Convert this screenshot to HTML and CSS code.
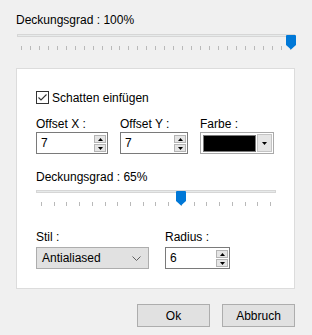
FILE: index.html
```html
<!DOCTYPE html>
<html lang="de">
<head>
  <meta charset="UTF-8" />
  <title>Schatten</title>
  <link rel="stylesheet" href="styles.css">
</head>
<body>
  <div class="dialog">
    <div class="label">Deckungsgrad : 100%</div>
    <div class="slider slider-wide">
      <div class="track"></div>
      <div class="ticks" id="ticks-top"></div>
      <svg class="thumb" style="left: 269px" width="10" height="15" viewBox="0 0 10 15"><path d="M0 1 Q0 0 1 0 H9 Q10 0 10 1 V10 L5 14.5 L0 10 Z" fill="#0078d7"/></svg>
    </div>

    <div class="panel">
      <label class="check-row">
        <svg class="checkbox" width="13" height="13" viewBox="0 0 13 13"><rect x="0.5" y="0.5" width="12" height="12" fill="#fff" stroke="#333"/><path d="M2.5 6.5 L5 9 L10.5 3.5" fill="none" stroke="#333" stroke-width="1.1"/></svg>
        <span>Schatten einfügen</span>
      </label>

      <div class="fields">
        <div class="field field-x">
          <div class="label">Offset X :</div>
          <div class="spin">
            <span class="spin-value">7</span>
            <div class="spin-buttons">
              <div class="spin-btn"><svg width="5" height="3" viewBox="0 0 5 3"><path d="M0 3 L2.5 0 L5 3 Z" fill="#000"/></svg></div>
              <div class="spin-btn"><svg width="5" height="3" viewBox="0 0 5 3"><path d="M0 0 L2.5 3 L5 0 Z" fill="#000"/></svg></div>
            </div>
          </div>
        </div>
        <div class="field field-y">
          <div class="label">Offset Y :</div>
          <div class="spin">
            <span class="spin-value">7</span>
            <div class="spin-buttons">
              <div class="spin-btn"><svg width="5" height="3" viewBox="0 0 5 3"><path d="M0 3 L2.5 0 L5 3 Z" fill="#000"/></svg></div>
              <div class="spin-btn"><svg width="5" height="3" viewBox="0 0 5 3"><path d="M0 0 L2.5 3 L5 0 Z" fill="#000"/></svg></div>
            </div>
          </div>
        </div>
        <div class="field field-color">
          <div class="label">Farbe :</div>
          <div class="color-combo">
            <div class="swatch"></div>
            <div class="combo-btn"><svg width="5" height="3" viewBox="0 0 5 3"><path d="M0 0 L2.5 3 L5 0 Z" fill="#000"/></svg></div>
          </div>
        </div>
      </div>

      <div class="label label-opacity">Deckungsgrad : 65%</div>
      <div class="slider slider-inner">
        <div class="track"></div>
        <div class="ticks" id="ticks-inner"></div>
        <svg class="thumb" style="left: 140px" width="10" height="15" viewBox="0 0 10 15"><path d="M0 1 Q0 0 1 0 H9 Q10 0 10 1 V10 L5 14.5 L0 10 Z" fill="#0078d7"/></svg>
      </div>

      <div class="fields fields-bottom">
        <div class="field field-style">
          <div class="label label-tall">Stil :</div>
          <div class="select">
            <span>Antialiased</span>
            <svg width="9" height="5" viewBox="0 0 9 5"><path d="M0.5 0.5 L4.5 4.5 L8.5 0.5" fill="none" stroke="#606060"/></svg>
          </div>
        </div>
        <div class="field field-radius">
          <div class="label label-tall">Radius :</div>
          <div class="spin">
            <span class="spin-value">6</span>
            <div class="spin-buttons">
              <div class="spin-btn"><svg width="5" height="3" viewBox="0 0 5 3"><path d="M0 3 L2.5 0 L5 3 Z" fill="#000"/></svg></div>
              <div class="spin-btn"><svg width="5" height="3" viewBox="0 0 5 3"><path d="M0 0 L2.5 3 L5 0 Z" fill="#000"/></svg></div>
            </div>
          </div>
        </div>
      </div>
    </div>

    <div class="actions">
      <button class="btn">Ok</button>
      <button class="btn">Abbruch</button>
    </div>
  </div>

  <script>
    function addTicks(id, count) {
      var box = document.getElementById(id);
      for (var i = 0; i < count; i++) {
        var t = document.createElement('span');
        t.className = 'tick';
        box.appendChild(t);
      }
    }
    addTicks('ticks-top', 31);
    addTicks('ticks-inner', 19);
  </script>
</body>
</html>
```

FILE: styles.css
```css
* {
  box-sizing: border-box;
  margin: 0;
  padding: 0;
}

body {
  font-family: 'Liberation Sans', Arial, sans-serif;
  font-size: 12px;
  color: #000;
  background-color: #f0f0f0;
}

.dialog {
  width: 312px;
  height: 335px;
  padding: 13px 17px 0 16px;
}

.label {
  height: 15px;
  line-height: 15px;
  white-space: nowrap;
}

/* trackbar */
.slider {
  position: relative;
  height: 22px;
}

.slider-wide {
  margin: 4px 0 0 1px;
  width: 278px;
}

.slider-inner {
  width: 240px;
}

.track {
  margin-top: 6px;
  height: 3px;
  background: #e7eaea;
  border: 1px solid #d6d6d6;
}

.ticks {
  display: flex;
  justify-content: space-between;
  margin-top: 9px;
  height: 4px;
}

.slider-wide .ticks {
  padding: 0 4px;
}

.slider-inner .ticks {
  padding: 0 5px;
}

.tick {
  width: 1px;
  height: 4px;
  background: #b9b9b9;
}

.thumb {
  position: absolute;
  top: 1px;
}

/* group panel */
.panel {
  margin-top: 12px;
  width: 279px;
  background: #fff;
  border: 1px solid #dcdcdc;
  padding: 21px 0 19px 19px;
}

.check-row {
  display: flex;
  align-items: center;
  gap: 3px;
  height: 15px;
}

.checkbox {
  display: block;
}

.fields {
  display: flex;
  gap: 12px;
  margin-top: 12px;
}

.field-x { width: 72px; }
.field-y { width: 68px; }
.field-color { width: 74px; }

.spin {
  display: flex;
  height: 22px;
  border: 1px solid #7a7a7a;
  background: #fff;
  padding: 1px 1px 1px 4px;
}

.spin-value {
  flex: 1;
  line-height: 19px;
}

.spin-buttons {
  display: flex;
  flex-direction: column;
  gap: 1px;
  width: 12px;
  padding-top: 1px;
}

.spin-btn {
  flex: 1;
  display: flex;
  align-items: center;
  justify-content: center;
  background: #e5e5e5;
  border: 1px solid #b4b4b4;
}

.spin-btn svg {
  display: block;
}

.color-combo {
  display: flex;
  height: 22px;
  border: 1px solid #a9a9a9;
  background: #fff;
  padding: 1px;
  gap: 1px;
}

.swatch {
  flex: 1;
  background: #000;
  border: 1px solid #7a7a7a;
  margin: 1px 0 0 1px;
}

.combo-btn {
  width: 15px;
  display: flex;
  align-items: center;
  justify-content: center;
  background: #e5e5e5;
  border: 1px solid #c4c4c4;
}

.label-opacity {
  margin-top: 16px;
  height: 14px;
}

.fields-bottom {
  gap: 16px;
  margin-top: 18px;
}

.label-tall {
  height: 17px;
  line-height: 14px;
}

.field-style { width: 113px; }
.field-radius { width: 65px; }

.select {
  display: flex;
  align-items: center;
  justify-content: space-between;
  height: 22px;
  padding: 0 7px 0 5px;
  background: #e1e1e1;
  border: 1px solid #adadad;
}

/* buttons */
.actions {
  display: flex;
  justify-content: flex-end;
  gap: 12px;
  margin-top: 15px;
}

.btn {
  width: 73px;
  height: 23px;
  font-family: 'Liberation Sans', Arial, sans-serif;
  font-size: 12px;
  color: #000;
  background: #e1e1e1;
  border: 1px solid #adadad;
}
```
